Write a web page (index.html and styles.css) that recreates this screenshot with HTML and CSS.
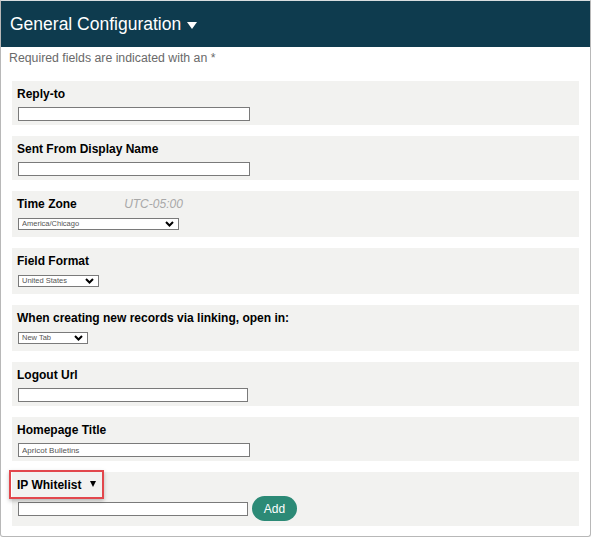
FILE: index.html
```html
<!DOCTYPE html>
<html lang="en">

<head>
    <meta charset="UTF-8">
    <title>General Configuration</title>
    <link rel="stylesheet" href="styles.css">
</head>

<body>

    <div class="panel">
        <div class="panel-header">
            <span>General Configuration</span>
            <svg class="caret" width="10" height="7" viewBox="0 0 10 7"><path d="M0 0h10L5 7z" fill="#fff"/></svg>
        </div>

        <p class="required">Required fields are indicated with an *</p>

        <div class="field">
            <label>Reply-to</label>
            <input type="text" class="text-input">
        </div>

        <div class="field">
            <label>Sent From Display Name</label>
            <input type="text" class="text-input">
        </div>

        <div class="field field-select">
            <label>Time Zone <span class="hint">UTC-05:00</span></label>
            <span class="select-wrap select-tz">
                <select>
                    <option>America/Chicago</option>
                </select>
                <svg class="chev" width="9" height="6" viewBox="0 0 9 6"><path d="M1 1l3.5 3.5L8 1" fill="none" stroke="#000" stroke-width="2"/></svg>
            </span>
        </div>

        <div class="field field-select">
            <label>Field Format</label>
            <span class="select-wrap select-format">
                <select>
                    <option>United States</option>
                </select>
                <svg class="chev" width="9" height="6" viewBox="0 0 9 6"><path d="M1 1l3.5 3.5L8 1" fill="none" stroke="#000" stroke-width="2"/></svg>
            </span>
        </div>

        <div class="field field-select">
            <label>When creating new records via linking, open in:</label>
            <span class="select-wrap select-tab">
                <select>
                    <option>New Tab</option>
                </select>
                <svg class="chev" width="9" height="6" viewBox="0 0 9 6"><path d="M1 1l3.5 3.5L8 1" fill="none" stroke="#000" stroke-width="2"/></svg>
            </span>
        </div>

        <div class="field">
            <label>Logout Url</label>
            <input type="text" class="text-input short">
        </div>

        <div class="field">
            <label>Homepage Title</label>
            <input type="text" class="text-input" value="Apricot Bulletins">
        </div>

        <div class="field field-ip">
            <label><span class="highlight">IP Whitelist
                <svg class="small-caret" width="6" height="6" viewBox="0 0 6 6"><path d="M0 0h6L3 6z" fill="#000"/></svg></span></label>
            <div class="ip-row">
                <input type="text" class="text-input short">
                <button class="btn-add">Add</button>
            </div>
        </div>
    </div>

</body>

</html>
```

FILE: styles.css
```css
body {
    margin: 0;
    font-family: "Liberation Sans", Arial, sans-serif;
    background: #fff;
}

.panel {
    width: 591px;
    box-sizing: border-box;
    border: 1px solid #b8b8b8;
    border-top-color: #d8dde0;
    border-radius: 0 0 3px 3px;
    padding-bottom: 10px;
}

.panel-header {
    height: 46px;
    background: #0e3b4e;
    color: #fff;
    font-size: 17.5px;
    display: flex;
    align-items: center;
    padding-left: 9px;
}

.panel-header .caret {
    margin-left: 6px;
    margin-top: 2px;
}

.required {
    margin: 0 0 15px;
    padding: 4px 8px 0;
    font-size: 12.3px;
    line-height: 15px;
    color: #6a6a6a;
}

.field {
    background: #f2f2f0;
    margin: 0 11px 11px;
    padding: 5px 5px 4px;
}

.field:last-child {
    margin-bottom: 0;
}

.field label {
    display: block;
    font-size: 12px;
    font-weight: bold;
    line-height: 16px;
    color: #000;
    margin-bottom: 5px;
}

.text-input {
    display: block;
    box-sizing: border-box;
    width: 232px;
    height: 14px;
    margin: 0 0 0 1px;
    padding: 0 3px;
    border: 1px solid #7a7a7a;
    background: #fff;
    font-family: "Liberation Sans", Arial, sans-serif;
    font-size: 8px;
    color: #555;
}

.text-input.short {
    width: 230px;
}

.field-select {
    padding-bottom: 7px;
}

.field-select label {
    margin-bottom: 6px;
}

.hint {
    font-weight: normal;
    font-style: italic;
    color: #a8a8a8;
    margin-left: 44px;
}

.select-wrap {
    position: relative;
    display: block;
    margin-left: 1px;
    height: 12px;
}

.select-wrap select {
    display: block;
    appearance: none;
    -webkit-appearance: none;
    box-sizing: border-box;
    height: 12px;
    width: 100%;
    margin: 0;
    padding: 0 3px;
    border: 1px solid #7a7a7a;
    border-radius: 0;
    background: #fff;
    font-family: "Liberation Sans", Arial, sans-serif;
    font-size: 7.5px;
    color: #555;
    line-height: 10px;
}

.select-tz {
    width: 161px;
}

.select-format {
    width: 81px;
}

.select-tab {
    width: 70px;
}

.chev {
    position: absolute;
    right: 5px;
    top: 3px;
}

.field-ip {
    padding-bottom: 5px;
}

.field-ip label {
    margin-bottom: 3px;
}

.highlight {
    position: relative;
    display: inline-block;
}

.highlight::after {
    content: "";
    position: absolute;
    top: -7px;
    bottom: -6px;
    left: -8px;
    right: -8px;
    border: 2px solid #e2474c;
    box-shadow: 0 2px 4px rgba(0, 0, 0, 0.25);
}

.small-caret {
    margin-left: 5px;
    vertical-align: 2px;
}

.ip-row {
    display: flex;
    align-items: center;
}

.btn-add {
    margin-left: 4px;
    width: 45px;
    height: 25px;
    border: none;
    border-radius: 13px;
    background: #2c8a76;
    color: #fff;
    font-family: "Liberation Sans", Arial, sans-serif;
    font-size: 12px;
    cursor: pointer;
}
```
